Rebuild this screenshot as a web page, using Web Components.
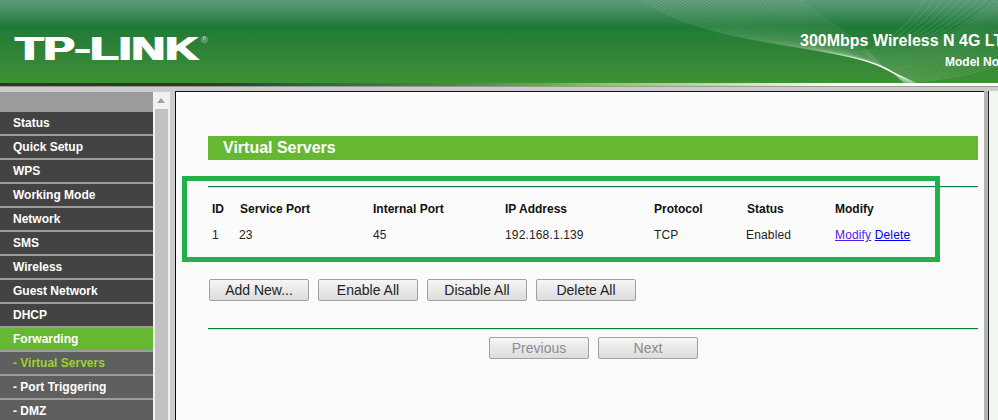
<!DOCTYPE html>
<html>
<head>
<meta charset="utf-8">
<title>Virtual Servers</title>
<style>
html, body { margin: 0; padding: 0; width: 998px; height: 420px; overflow: hidden; background: #ccc; }
body { font-family: "Liberation Sans", Arial, sans-serif; font-size: 12px; display: flex; flex-direction: column; }
</style>
</head>
<body>
<tp-header></tp-header>
<tp-frame>
  <tp-menu slot="menu">
    <tp-menu-item>Status</tp-menu-item>
    <tp-menu-item>Quick Setup</tp-menu-item>
    <tp-menu-item>WPS</tp-menu-item>
    <tp-menu-item>Working Mode</tp-menu-item>
    <tp-menu-item>Network</tp-menu-item>
    <tp-menu-item>SMS</tp-menu-item>
    <tp-menu-item>Wireless</tp-menu-item>
    <tp-menu-item>Guest Network</tp-menu-item>
    <tp-menu-item>DHCP</tp-menu-item>
    <tp-menu-item type="active">Forwarding</tp-menu-item>
    <tp-menu-item type="sub current">- Virtual Servers</tp-menu-item>
    <tp-menu-item type="sub">- Port Triggering</tp-menu-item>
    <tp-menu-item type="sub">- DMZ</tp-menu-item>
  </tp-menu>
  <tp-section-title>Virtual Servers</tp-section-title>
  <tp-rule style="margin-top:26px"></tp-rule>
  <tp-server-table></tp-server-table>
  <tp-button-row style="margin-top:31px">
    <tp-button>Add New...</tp-button>
    <tp-button>Enable All</tp-button>
    <tp-button>Disable All</tp-button>
    <tp-button>Delete All</tp-button>
  </tp-button-row>
  <tp-rule style="margin-top:27px"></tp-rule>
  <tp-button-row center style="margin-top:7px">
    <tp-button disabled>Previous</tp-button>
    <tp-button disabled>Next</tp-button>
  </tp-button-row>
  <tp-highlight></tp-highlight>
</tp-frame>

<script>
class TpHeader extends HTMLElement
{
    constructor()
    {
        super();
        this.attachShadow({ mode: 'open' });
    }

    connectedCallback()
    {
        this.shadowRoot.innerHTML = `
      <style>
        :host {
            display: block;
            flex: none;
            height: 87px;
            position: relative;
            overflow: hidden;
            font-family: "Liberation Sans", Arial, sans-serif;
            color: #fff;
        }
        .banner {
            height: 83px;
            background: linear-gradient(#5c9b76 0, #4a9064 9px, #1f7a38 26px, #2a7f36 42px, #3f9036 83px);
            display: flex;
            justify-content: space-between;
            box-sizing: border-box;
            padding: 36px 0 0 15px;
        }
        .stripe {
            height: 3px;
            background: linear-gradient(90deg, #2c332c 0, #2a3e30 220px, #1c7040 310px, #3c8f3a 450px, #5cb040 540px, #8ecb5f 610px, #b4dc90 700px, #e8f3dc 800px, #fff 850px, #fff 998px);
        }
        .line {
            height: 1px;
            background: #999;
        }
        svg {
            position: absolute;
            left: 0;
            top: 0;
            fill: none;
            stroke: #fff;
            stroke-opacity: .19;
            stroke-width: .7;
        }
        .brand {
            position: relative;
            display: flex;
            align-items: flex-start;
        }
        .logo {
            width: 186px;
            height: 24px;
        }
        .logo span {
            display: inline-block;
            font-size: 34px;
            line-height: 24px;
            font-weight: 700;
            white-space: nowrap;
            transform: scaleX(1.37);
            transform-origin: 0 0;
            text-shadow: 1px 0 #fff, -.8px 0 #fff, .5px 0 #fff;
        }
        .reg {
            font-size: 9px;
            line-height: 9px;
            color: #cfe4cf;
        }
        .model {
            position: relative;
            width: 198px;
            margin-top: -4px;
            overflow: hidden;
            white-space: nowrap;
            font-weight: 700;
        }
        .name { font-size: 16px; line-height: 18px; }
        .no { font-size: 12px; line-height: 14px; margin: 5px 0 0 145px; }
      </style>
      <div class="banner">
        <svg width="998" height="83" viewBox="0 0 998 83">${this.swoosh()}</svg>
        <div class="brand"><div class="logo"><span>TP-LINK</span></div><span class="reg">®</span></div>
        <div class="model">
            <div class="name">300Mbps Wireless N 4G LTE</div>
            <div class="no">Model No.</div>
        </div>
      </div>
      <div class="stripe"></div>
      <div class="line"></div>
    `;
    }

    swoosh()
    {
        let d = '';
        const n = 34;
        for (let i = 0; i < n; i++)
        {
            const t = i / (n - 1);
            const mix = (a, b) => (a + (b - a) * t).toFixed(1);
            // left fan, falling to the bottom edge
            d += `<path d="M${mix(642, 800)} 0 C${mix(690, 825)} ${mix(34, 20)} ${mix(770, 860)} ${mix(42, 40)} ${mix(830, 875)} ${mix(53, 58)} S${mix(890, 895)} ${mix(70, 72)} ${mix(904, 916)} 83"/>`;
            // right fan, rising to the top right
            const sx = 905 - 43 * t, sy = 83 - 31 * t;
            const ex = t < .75 ? 998 : 998 - 73 * (t - .75) / .25;
            const ey = t < .75 ? 66 * (1 - t / .75) : 0;
            d += `<path d="M${sx.toFixed(1)} ${sy.toFixed(1)} Q${(sx + (ex - sx) * .55).toFixed(1)} ${(sy - (sy - ey) * .2).toFixed(1)} ${ex.toFixed(1)} ${ey.toFixed(1)}"/>`;
        }
        return d;
    }
}

class TpFrame extends HTMLElement
{
    constructor()
    {
        super();
        this.attachShadow({ mode: 'open' });
    }

    connectedCallback()
    {
        this.shadowRoot.innerHTML = `
      <style>
        :host {
            display: flex;
            flex: 1;
            min-height: 0;
            padding-top: 4px;
            background: #ccc;
        }
        .side {
            width: 153px;
            flex: none;
            overflow: hidden;
            margin-top: 1px;
        }
        .bar {
            width: 17px;
            flex: none;
            margin-top: 1px;
            background: #f1f1f1;
            position: relative;
            box-sizing: border-box;
            padding: 17px 2px 0 2px;
        }
        .bar::before {
            content: "";
            position: absolute;
            left: 4px;
            top: 6px;
            border: 4px solid transparent;
            border-top: 0;
            border-bottom: 5px solid #a3a3a3;
        }
        .thumb { height: 100%; background: #c1c1c1; }
        .gap {
            width: 5px;
            flex: none;
            background: #ccc;
        }
        .main {
            flex: 1;
            background: #fbfbfb;
            border-left: 1px solid #111;
            border-top: 1px solid #111;
            box-sizing: border-box;
            padding: 44px 6px 0 32px;
        }
        .edge {
            width: 4px;
            flex: none;
            background: #b4b4b4;
        }
        .rest {
            width: 9px;
            flex: none;
            background: #f0f6f0;
            border-left: 1px solid #222;
        }
      </style>
      <div class="side"><slot name="menu"></slot></div>
      <div class="bar"><div class="thumb"></div></div>
      <div class="gap"></div>
      <div class="main"><slot></slot></div>
      <div class="edge"></div>
      <div class="rest"></div>
    `;
    }
}

class TpMenu extends HTMLElement
{
    constructor()
    {
        super();
        this.attachShadow({ mode: 'open' });
    }

    connectedCallback()
    {
        this.shadowRoot.innerHTML = `
      <style>
        :host {
            display: flex;
            flex-direction: column;
            gap: 2px;
            background: #9c9c9c;
            padding-top: 20px;
            height: 100%;
            box-sizing: border-box;
        }
      </style>
      <slot></slot>
    `;
    }
}

class TpMenuItem extends HTMLElement
{
    constructor()
    {
        super();
        this.attachShadow({ mode: 'open' });
    }

    connectedCallback()
    {
        this.shadowRoot.innerHTML = `
      <style>
        :host {
            display: flex;
            align-items: center;
            flex: none;
            height: 22px;
            padding-left: 13px;
            background: #434343;
            color: #fff;
            font: 700 12px "Liberation Sans", Arial, sans-serif;
            white-space: nowrap;
        }
        :host([type~="active"]) { background: #66b832; }
        :host([type~="sub"]) { background: #5f5f5f; }
        :host([type~="current"]) { color: #9ad32f; }
      </style>
      <slot></slot>
    `;
    }
}

class TpSectionTitle extends HTMLElement
{
    constructor()
    {
        super();
        this.attachShadow({ mode: 'open' });
    }

    connectedCallback()
    {
        this.shadowRoot.innerHTML = `
      <style>
        :host {
            display: flex;
            align-items: center;
            height: 24px;
            padding-left: 15px;
            background: #66b832;
            color: #fff;
            font: 700 16px "Liberation Sans", Arial, sans-serif;
        }
      </style>
      <slot></slot>
    `;
    }
}

class TpRule extends HTMLElement
{
    constructor()
    {
        super();
        this.attachShadow({ mode: 'open' });
    }

    connectedCallback()
    {
        this.shadowRoot.innerHTML = `
      <style>
        :host {
            display: block;
            height: 1px;
            background: #0b7a3e;
            border-bottom: 1px solid #d3e4d8;
        }
      </style>
    `;
    }
}

class TpServerTable extends HTMLElement
{
    constructor()
    {
        super();
        this.attachShadow({ mode: 'open' });
    }

    connectedCallback()
    {
        this.shadowRoot.innerHTML = `
      <style>
        :host {
            display: grid;
            grid-template-columns: 28px 133px 132px 149px 93px 88px 1fr;
            grid-auto-rows: 26px;
            align-items: center;
            padding: 8px 0 0 4px;
            font: 12px "Liberation Sans", Arial, sans-serif;
            color: #222;
        }
        b { color: #111; }
        span { letter-spacing: .15px; }
        .in { margin-left: -1px; }
        a { color: #00e; text-decoration: underline; }
        a.seen { color: #551aee; }
      </style>
      <b>ID</b><b>Service Port</b><b>Internal Port</b><b>IP Address</b><b>Protocol</b><b>Status</b><b>Modify</b>
      <span>1</span><span class="in">23</span><span>45</span><span>192.168.1.139</span><span>TCP</span><span class="in">Enabled</span>
      <span><a class="seen" href="#">Modify</a> <a href="#">Delete</a></span>
    `;
    }
}

class TpButtonRow extends HTMLElement
{
    constructor()
    {
        super();
        this.attachShadow({ mode: 'open' });
    }

    connectedCallback()
    {
        this.shadowRoot.innerHTML = `
      <style>
        :host {
            display: flex;
            gap: 9px;
            padding-left: 1px;
        }
        :host([center]) { padding-left: 281px; }
      </style>
      <slot></slot>
    `;
    }
}

class TpButton extends HTMLElement
{
    constructor()
    {
        super();
        this.attachShadow({ mode: 'open' });
    }

    connectedCallback()
    {
        this.shadowRoot.innerHTML = `
      <style>
        :host {
            display: flex;
            align-items: center;
            justify-content: center;
            box-sizing: border-box;
            width: 100px;
            height: 22px;
            border: 1px solid #a0a0a0;
            border-radius: 2px;
            background: linear-gradient(#f6f6f6, #dcdcdc);
            color: #222;
            font: 14px "Liberation Sans", Arial, sans-serif;
        }
        :host([disabled]) { color: #8c8c8c; }
      </style>
      <slot></slot>
    `;
    }
}

// the green annotation box drawn over the screenshot
class TpHighlight extends HTMLElement
{
    constructor()
    {
        super();
        this.attachShadow({ mode: 'open' });
    }

    connectedCallback()
    {
        this.shadowRoot.innerHTML = `
      <style>
        :host {
            position: absolute;
            left: 182px;
            top: 176px;
            width: 758px;
            height: 86px;
            box-sizing: border-box;
            border: 5px solid #22b04c;
            pointer-events: none;
        }
      </style>
    `;
    }
}

window.customElements.define("tp-header", TpHeader);
window.customElements.define("tp-frame", TpFrame);
window.customElements.define("tp-menu", TpMenu);
window.customElements.define("tp-menu-item", TpMenuItem);
window.customElements.define("tp-section-title", TpSectionTitle);
window.customElements.define("tp-rule", TpRule);
window.customElements.define("tp-server-table", TpServerTable);
window.customElements.define("tp-button-row", TpButtonRow);
window.customElements.define("tp-button", TpButton);
window.customElements.define("tp-highlight", TpHighlight);
</script>
</body>
</html>
